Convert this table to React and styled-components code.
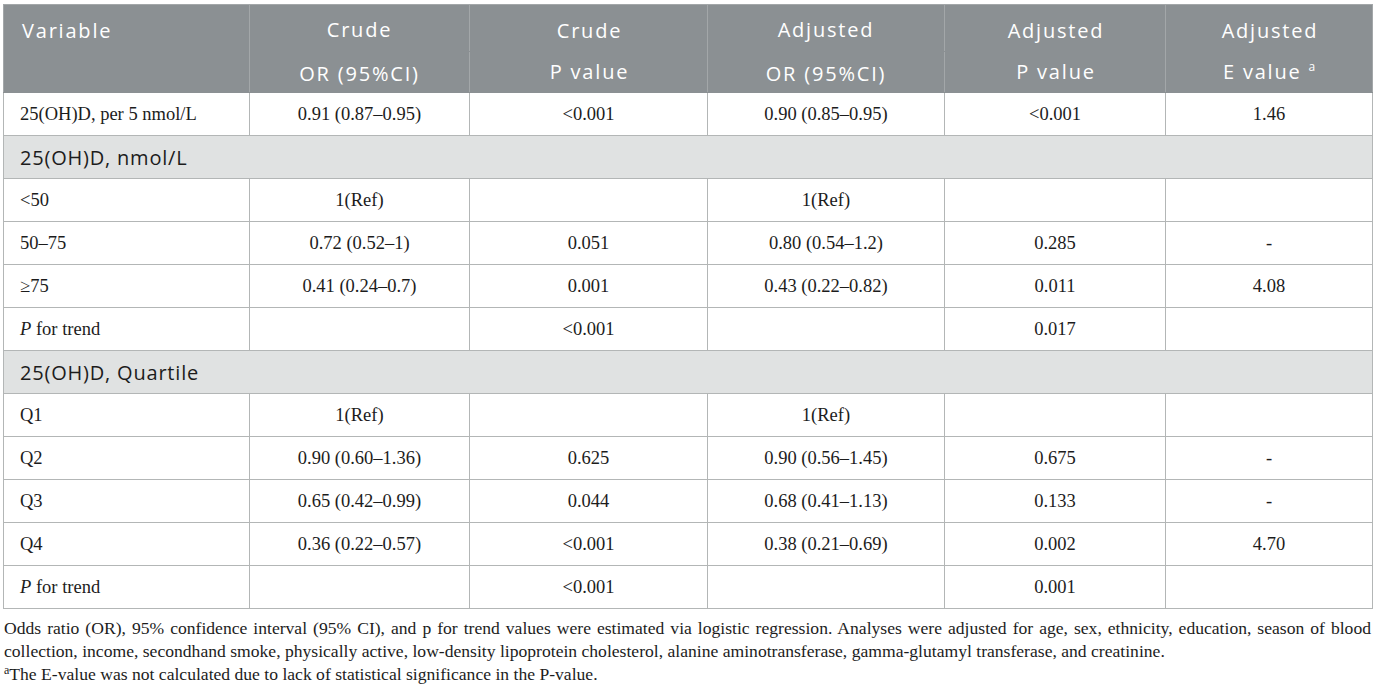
import React from 'react'
import styled, { createGlobalStyle } from 'styled-components'

const GlobalStyle = createGlobalStyle`
  html, body {
    margin: 0;
    background: #ffffff;
  }
`

const rows = [
  { kind: 'row', label: '25(OH)D, per 5 nmol/L', cells: ['0.91 (0.87–0.95)', '<0.001', '0.90 (0.85–0.95)', '<0.001', '1.46'] },
  { kind: 'group', label: '25(OH)D, nmol/L' },
  { kind: 'row', label: '<50', cells: ['1(Ref)', '', '1(Ref)', '', ''] },
  { kind: 'row', label: '50–75', cells: ['0.72 (0.52–1)', '0.051', '0.80 (0.54–1.2)', '0.285', '-'] },
  { kind: 'row', label: '≥75', cells: ['0.41 (0.24–0.7)', '0.001', '0.43 (0.22–0.82)', '0.011', '4.08'] },
  { kind: 'trend', cells: ['', '<0.001', '', '0.017', ''] },
  { kind: 'group', label: '25(OH)D, Quartile' },
  { kind: 'row', label: 'Q1', cells: ['1(Ref)', '', '1(Ref)', '', ''] },
  { kind: 'row', label: 'Q2', cells: ['0.90 (0.60–1.36)', '0.625', '0.90 (0.56–1.45)', '0.675', '-'] },
  { kind: 'row', label: 'Q3', cells: ['0.65 (0.42–0.99)', '0.044', '0.68 (0.41–1.13)', '0.133', '-'] },
  { kind: 'row', label: 'Q4', cells: ['0.36 (0.22–0.57)', '<0.001', '0.38 (0.21–0.69)', '0.002', '4.70'] },
  { kind: 'trend', cells: ['', '<0.001', '', '0.001', ''] },
]

export default function App() {
  return (
    <Page>
      <GlobalStyle />
      <Table>
        <colgroup>
          <col style={{ width: 246 }} />
          <col style={{ width: 220 }} />
          <col style={{ width: 238 }} />
          <col style={{ width: 237 }} />
          <col style={{ width: 221 }} />
          <col style={{ width: 207 }} />
        </colgroup>
        <thead>
          <HeadRow $top>
            <HeadCell rowSpan={2} $align='left' $stacked>Variable</HeadCell>
            <HeadCell>Crude</HeadCell>
            <HeadCell rowSpan={2} $stacked>Crude<br />P value</HeadCell>
            <HeadCell>Adjusted</HeadCell>
            <HeadCell rowSpan={2} $stacked>Adjusted<br />P value</HeadCell>
            <HeadCell rowSpan={2} $stacked>Adjusted<br />E value <Sup>a</Sup></HeadCell>
          </HeadRow>
          <HeadRow>
            <HeadCell>OR (95%CI)</HeadCell>
            <HeadCell>OR (95%CI)</HeadCell>
          </HeadRow>
        </thead>
        <tbody>
          {rows.map((r, i) => {
            if (r.kind === 'group') return (
              <tr key={i}>
                <GroupCell colSpan={6}>{r.label}</GroupCell>
              </tr>
            )
            return (
              <tr key={i}>
                <Cell $align='left'>
                  {r.kind === 'trend' ? <><i>P</i> for trend</> : r.label}
                </Cell>
                {r.cells.map((c, j) => <Cell key={j}>{c}</Cell>)}
              </tr>
            )
          })}
        </tbody>
      </Table>
      <Notes>
        <p>Odds ratio (OR), 95% confidence interval (95% CI), and p for trend values were estimated via logistic regression. Analyses were adjusted for age, sex, ethnicity, education, season of blood collection, income, secondhand smoke, physically active, low-density lipoprotein cholesterol, alanine aminotransferase, gamma-glutamyl transferase, and creatinine.</p>
        <p><NoteMark>a</NoteMark>The E-value was not calculated due to lack of statistical significance in the P-value.</p>
      </Notes>
    </Page>
  )
}

const Page = styled.div`
  padding: 4px 3px 0 3px;
  width: 1369px;
`

const Table = styled.table`
  width: 1369px;
  table-layout: fixed;
  border-collapse: collapse;
  border: 1px solid #b7bbbb;
`

const HeadRow = styled.tr`
  height: ${p => p.$top ? '46px' : '41px'};
`

const HeadCell = styled.th`
  background: #8b9093;
  color: #ffffff;
  font-family: "Open Sans", sans-serif;
  font-weight: 400;
  font-size: 20px;
  letter-spacing: 1.8px;
  text-align: ${p => p.$align || 'center'};
  vertical-align: ${p => p.$stacked ? 'top' : 'middle'};
  line-height: ${p => p.$stacked ? '41px' : '24px'};
  padding: ${p => p.$stacked ? '5px 16px 0 18px' : '4px 16px 0'};
  border: 1px solid #a3a7a9;
  border-bottom-color: #8b9093;
`

const Sup = styled.sup`
  font-size: 12px;
  vertical-align: 8px;
  line-height: 0;
`

const Cell = styled.td`
  height: 42px;
  padding: 0 16px;
  border: 1px solid #b3b6b6;
  font-family: "Liberation Serif", "Times New Roman", serif;
  font-size: 18.5px;
  color: #1c1c1c;
  text-align: ${p => p.$align || 'center'};
  vertical-align: middle;
`

const GroupCell = styled.td`
  height: 42px;
  padding: 0 16px;
  background: #e0e2e2;
  border: 1px solid #b3b6b6;
  font-family: "Open Sans", sans-serif;
  font-size: 20px;
  letter-spacing: 0.8px;
  color: #1c1c1c;
  vertical-align: middle;
`

const Notes = styled.div`
  padding: 8px 1px 0 1px;
  font-family: "Liberation Serif", "Times New Roman", serif;
  font-size: 17.6px;
  line-height: 23px;
  color: #1c1c1c;
  text-align: justify;

  p {
    margin: 0;
  }
`

const NoteMark = styled.sup`
  font-size: 12px;
  vertical-align: 6px;
  line-height: 0;
`
